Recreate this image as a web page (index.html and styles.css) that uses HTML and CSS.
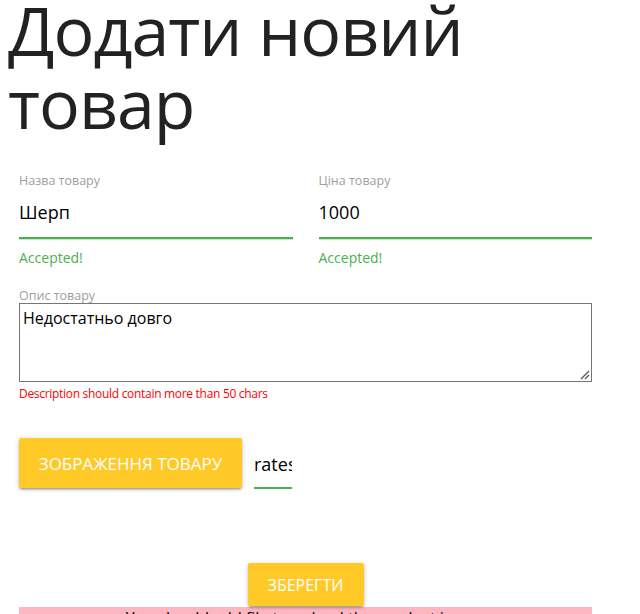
FILE: index.html
```html
<!DOCTYPE html>
<html lang="uk">
<head>
<meta charset="utf-8">
<link rel="stylesheet" href="styles.css">
</head>
<body>
<h1 class="title">Додати новий товар</h1>
<form class="form">
  <div class="row">
    <div class="field">
      <label class="label">Назва товару</label>
      <div class="input name">Шерп</div>
      <div class="helper ok">Accepted!</div>
    </div>
    <div class="field">
      <label class="label">Ціна товару</label>
      <div class="input price">1000</div>
      <div class="helper ok">Accepted!</div>
    </div>
  </div>
  <div class="desc">
    <label class="label desc-label">Опис товару</label>
    <div class="textarea">Недостатньо довго
      <svg class="grip" width="11" height="11" viewBox="0 0 11 11"><path d="M10 2 L2 10 M10 6 L6 10" stroke="#555" stroke-width="1.3" fill="none"/></svg>
    </div>
    <div class="helper err">Description should contain more than 50 chars</div>
  </div>
  <div class="file-row">
    <button type="button" class="btn btn-file">Зображення товару</button>
    <div class="file-path">rates</div>
  </div>
  <div class="save-row">
    <button type="button" class="btn btn-save">Зберегти</button>
  </div>
  <div class="alert">You should add file to upload the product image</div>
</form>
</body>
</html>
```
FILE: styles.css
```css
html, body {
  margin: 0;
  padding: 0;
  background: #fff;
  font-family: "Open Sans", "Noto Sans", sans-serif;
  color: #000;
}
.title {
  margin: -7px 0 0;
  padding: 0 0 0 8px;
  font-family: "Open Sans", "Noto Sans", sans-serif;
  font-weight: 400;
  font-size: 68px;
  line-height: 73px;
  color: #222;
  letter-spacing: -1px;
}
.form {
  padding: 0 48px 0 19px;
  margin-top: 34px;
}
.row {
  display: grid;
  grid-template-columns: 1fr 1fr;
  column-gap: 26px;
}
.label {
  display: block;
  font-size: 12.5px;
  line-height: 16px;
  color: #9e9e9e;
}
.input {
  margin-top: 10px;
  height: 38px;
  font-size: 18px;
  line-height: 26px;
  border-bottom: 2px solid #4caf50;
  box-shadow: 0 1px 0 0 #c8e6c9;
}
.helper {
  font-size: 13px;
  line-height: 18px;
}
.ok {
  color: #4caf50;
  font-size: 14px;
  margin-top: 10px;
}
.desc {
  margin-top: 22px;
}
.desc-label {
  line-height: 14px;
}
.textarea {
  position: relative;
  height: 75px;
  border: 1px solid #767676;
  font-size: 16px;
  line-height: 24px;
  padding: 2px 3px 0;
}
.grip {
  position: absolute;
  right: 1px;
  bottom: 1px;
}
.err {
  color: #f00;
  font-size: 12px;
  letter-spacing: -0.3px;
  margin-top: 3px;
}
.file-row {
  display: flex;
  align-items: flex-start;
  gap: 12px;
  margin-top: 35px;
}
.btn {
  border: none;
  border-radius: 2px;
  background: #ffca28;
  color: #fff;
  font-family: "Open Sans", "Noto Sans", sans-serif;
  font-size: 16px;
  text-transform: uppercase;
  box-shadow: 0 2px 2px 0 rgba(0,0,0,0.14), 0 3px 1px -2px rgba(0,0,0,0.12), 0 1px 5px 0 rgba(0,0,0,0.2);
  cursor: pointer;
}
.btn-file {
  width: 223px;
  height: 50px;
  padding: 0;
  font-size: 17px;
}
.file-path {
  width: 38px;
  overflow: hidden;
  white-space: nowrap;
  font-size: 18px;
  line-height: 24px;
  padding-top: 14px;
  height: 35px;
  border-bottom: 2px solid #4caf50;
}
.save-row {
  display: flex;
  justify-content: center;
  margin-top: 74px;
}
.btn-save {
  width: 116px;
  height: 43px;
  padding: 0;
}
.alert {
  margin-top: 1px;
  background: #ffb6c1;
  text-align: center;
  font-size: 16px;
  line-height: 23px;
  padding: 0 0 10px;
}
```
